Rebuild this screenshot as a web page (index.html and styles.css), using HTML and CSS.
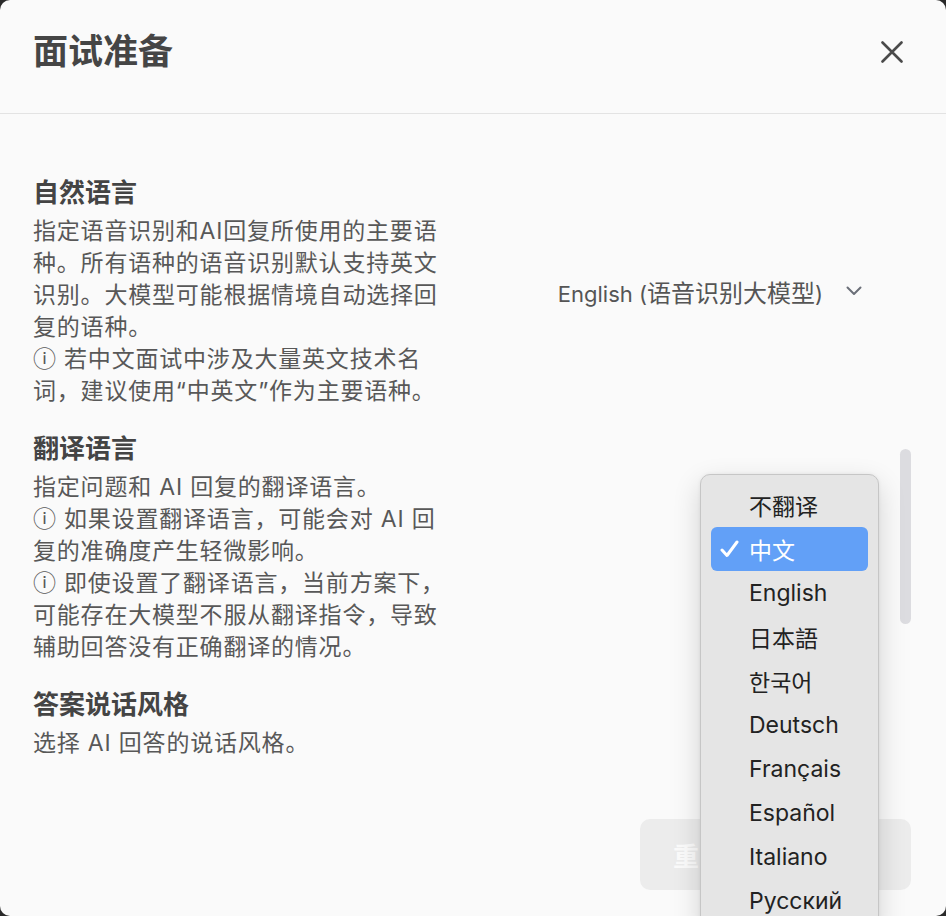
FILE: index.html
```html
<!DOCTYPE html>
<html>

<head>
  <meta charset="UTF-8">
  <link rel="stylesheet" href="styles.css">
</head>

<body>
  <div class="window">
    <header class="dialog-header">
      <h1 class="dialog-title">面试准备</h1>
      <button class="close-btn" aria-label="关闭">
        <svg width="22" height="22" viewBox="0 0 22 22">
          <path d="M1.5 1.5 L20.5 20.5 M20.5 1.5 L1.5 20.5" stroke="#4a4a4a" stroke-width="2.6" stroke-linecap="round" fill="none" />
        </svg>
      </button>
    </header>

    <main class="dialog-body">
      <section class="setting-row">
        <div class="setting-info">
          <h2 class="setting-title">自然语言</h2>
          <p class="setting-desc">指定语音识别和AI回复所使用的主要语种。所有语种的语音识别默认支持英文识别。大模型可能根据情境自动选择回复的语种。<br>ⓘ 若中文面试中涉及大量英文技术名词，建议使用“中英文”作为主要语种。</p>
        </div>
        <div class="select">
          <span class="select-value">English (<span class="cjk">语音识别大模型</span>)</span>
          <svg class="chevron" width="16" height="10" viewBox="0 0 16 10">
            <path d="M1.5 1.5 L8 8 L14.5 1.5" stroke="#6b6f78" stroke-width="2" stroke-linecap="round" stroke-linejoin="round" fill="none" />
          </svg>
        </div>
      </section>

      <section class="setting-row">
        <div class="setting-info">
          <h2 class="setting-title">翻译语言</h2>
          <p class="setting-desc">指定问题和 AI 回复的翻译语言。<br>ⓘ 如果设置翻译语言，可能会对 AI 回复的准确度产生轻微影响。<br>ⓘ 即使设置了翻译语言，当前方案下，可能存在大模型不服从翻译指令，导致辅助回答没有正确翻译的情况。</p>
        </div>
        <!-- popup of this select is open, see .popup-menu -->
        <div class="select is-open">
          <span class="select-value">中文</span>
          <svg class="chevron" width="16" height="10" viewBox="0 0 16 10">
            <path d="M1.5 1.5 L8 8 L14.5 1.5" stroke="#6b6f78" stroke-width="2" stroke-linecap="round" stroke-linejoin="round" fill="none" />
          </svg>
        </div>
      </section>

      <section class="setting-row">
        <div class="setting-info">
          <h2 class="setting-title">答案说话风格</h2>
          <p class="setting-desc">选择 AI 回答的说话风格。</p>
        </div>
        <div class="select is-open">
          <span class="select-value">默认</span>
          <svg class="chevron" width="16" height="10" viewBox="0 0 16 10">
            <path d="M1.5 1.5 L8 8 L14.5 1.5" stroke="#6b6f78" stroke-width="2" stroke-linecap="round" stroke-linejoin="round" fill="none" />
          </svg>
        </div>
      </section>

      <div class="actions">
        <button class="btn-reset">重置</button>
      </div>
    </main>

    <div class="scrollbar"></div>

    <!-- native select popup, open over the translation select -->
    <ul class="popup-menu">
      <li class="menu-item">不翻译</li>
      <li class="menu-item selected">
        <svg class="check" width="19" height="18" viewBox="0 0 19 18">
          <path d="M2 10 L7 15.5 L17 2" stroke="#fff" stroke-width="3" stroke-linecap="round" stroke-linejoin="round" fill="none" />
        </svg>中文
      </li>
      <li class="menu-item">English</li>
      <li class="menu-item">日本語</li>
      <li class="menu-item">한국어</li>
      <li class="menu-item">Deutsch</li>
      <li class="menu-item">Français</li>
      <li class="menu-item">Español</li>
      <li class="menu-item">Italiano</li>
      <li class="menu-item">Русский</li>
    </ul>
  </div>
</body>

</html>
```

FILE: styles.css
```css
* {
  box-sizing: border-box;
}

html,
body {
  margin: 0;
  height: 100%;
  background-color: #2a2a2a;
}

body {
  font-family: "Inter", "Noto Sans CJK SC", sans-serif;
  color: #555;
}

.window {
  position: relative;
  width: 946px;
  height: 916px;
  background-color: #fafafa;
  border-radius: 10px;
  overflow: hidden;
}

.dialog-header {
  display: flex;
  justify-content: space-between;
  align-items: center;
  height: 114px;
  padding: 0 43px 10px 33px;
  border-bottom: 1px solid #e3e3e3;
}

.dialog-title {
  margin: 0;
  font-size: 35px;
  font-weight: 600;
  color: #454545;
  line-height: 1;
}

.close-btn {
  display: flex;
  padding: 0;
  border: none;
  background: none;
  cursor: pointer;
}

.dialog-body {
  padding: 61px 35px 0 33px;
}

.setting-row {
  display: flex;
  justify-content: space-between;
  align-items: center;
  margin-bottom: 24px;
}

.setting-info {
  width: 420px;
}

.setting-title {
  margin: 0 0 4px 0;
  font-size: 26px;
  font-weight: 700;
  line-height: 36px;
  color: #444;
}

.setting-desc {
  margin: 0;
  font-size: 23px;
  letter-spacing: 0.8px;
  line-height: 32px;
  color: #585858;
}

.select {
  display: flex;
  align-items: center;
  gap: 23px;
  margin-right: 49px;
  font-size: 22px;
  color: #555;
}

.select.is-open {
  visibility: hidden;
}

.select .cjk {
  font-size: 24px;
}

.chevron {
  flex: none;
}

.actions {
  display: flex;
  justify-content: flex-end;
  margin-top: 60px;
}

.btn-reset {
  width: 271px;
  height: 71px;
  padding: 0 0 0 33px;
  border: none;
  border-radius: 10px;
  background-color: #ececec;
  color: #fbfbfb;
  font-family: "Inter", "Noto Sans CJK SC", sans-serif;
  font-size: 26px;
  font-weight: 700;
  text-align: left;
}

.scrollbar {
  position: absolute;
  top: 449px;
  right: 35px;
  width: 11px;
  height: 175px;
  border-radius: 6px;
  background-color: #dcdce0;
}

.popup-menu {
  position: absolute;
  top: 474px;
  left: 700px;
  width: 179px;
  margin: 0;
  padding: 8px 10px;
  list-style: none;
  background-color: #e5e5e5;
  border: 1px solid #c6c6c6;
  border-radius: 10px;
  box-shadow: 0 10px 28px rgba(0, 0, 0, 0.16), 0 0 4px rgba(0, 0, 0, 0.06);
}

.menu-item {
  position: relative;
  display: flex;
  align-items: center;
  height: 44px;
  padding-left: 38px;
  border-radius: 6px;
  font-size: 23px;
  color: #222;
  white-space: nowrap;
}

.menu-item.selected {
  background-color: #62a0f7;
  color: #fff;
}

.check {
  position: absolute;
  left: 9px;
  top: 13px;
}
```
